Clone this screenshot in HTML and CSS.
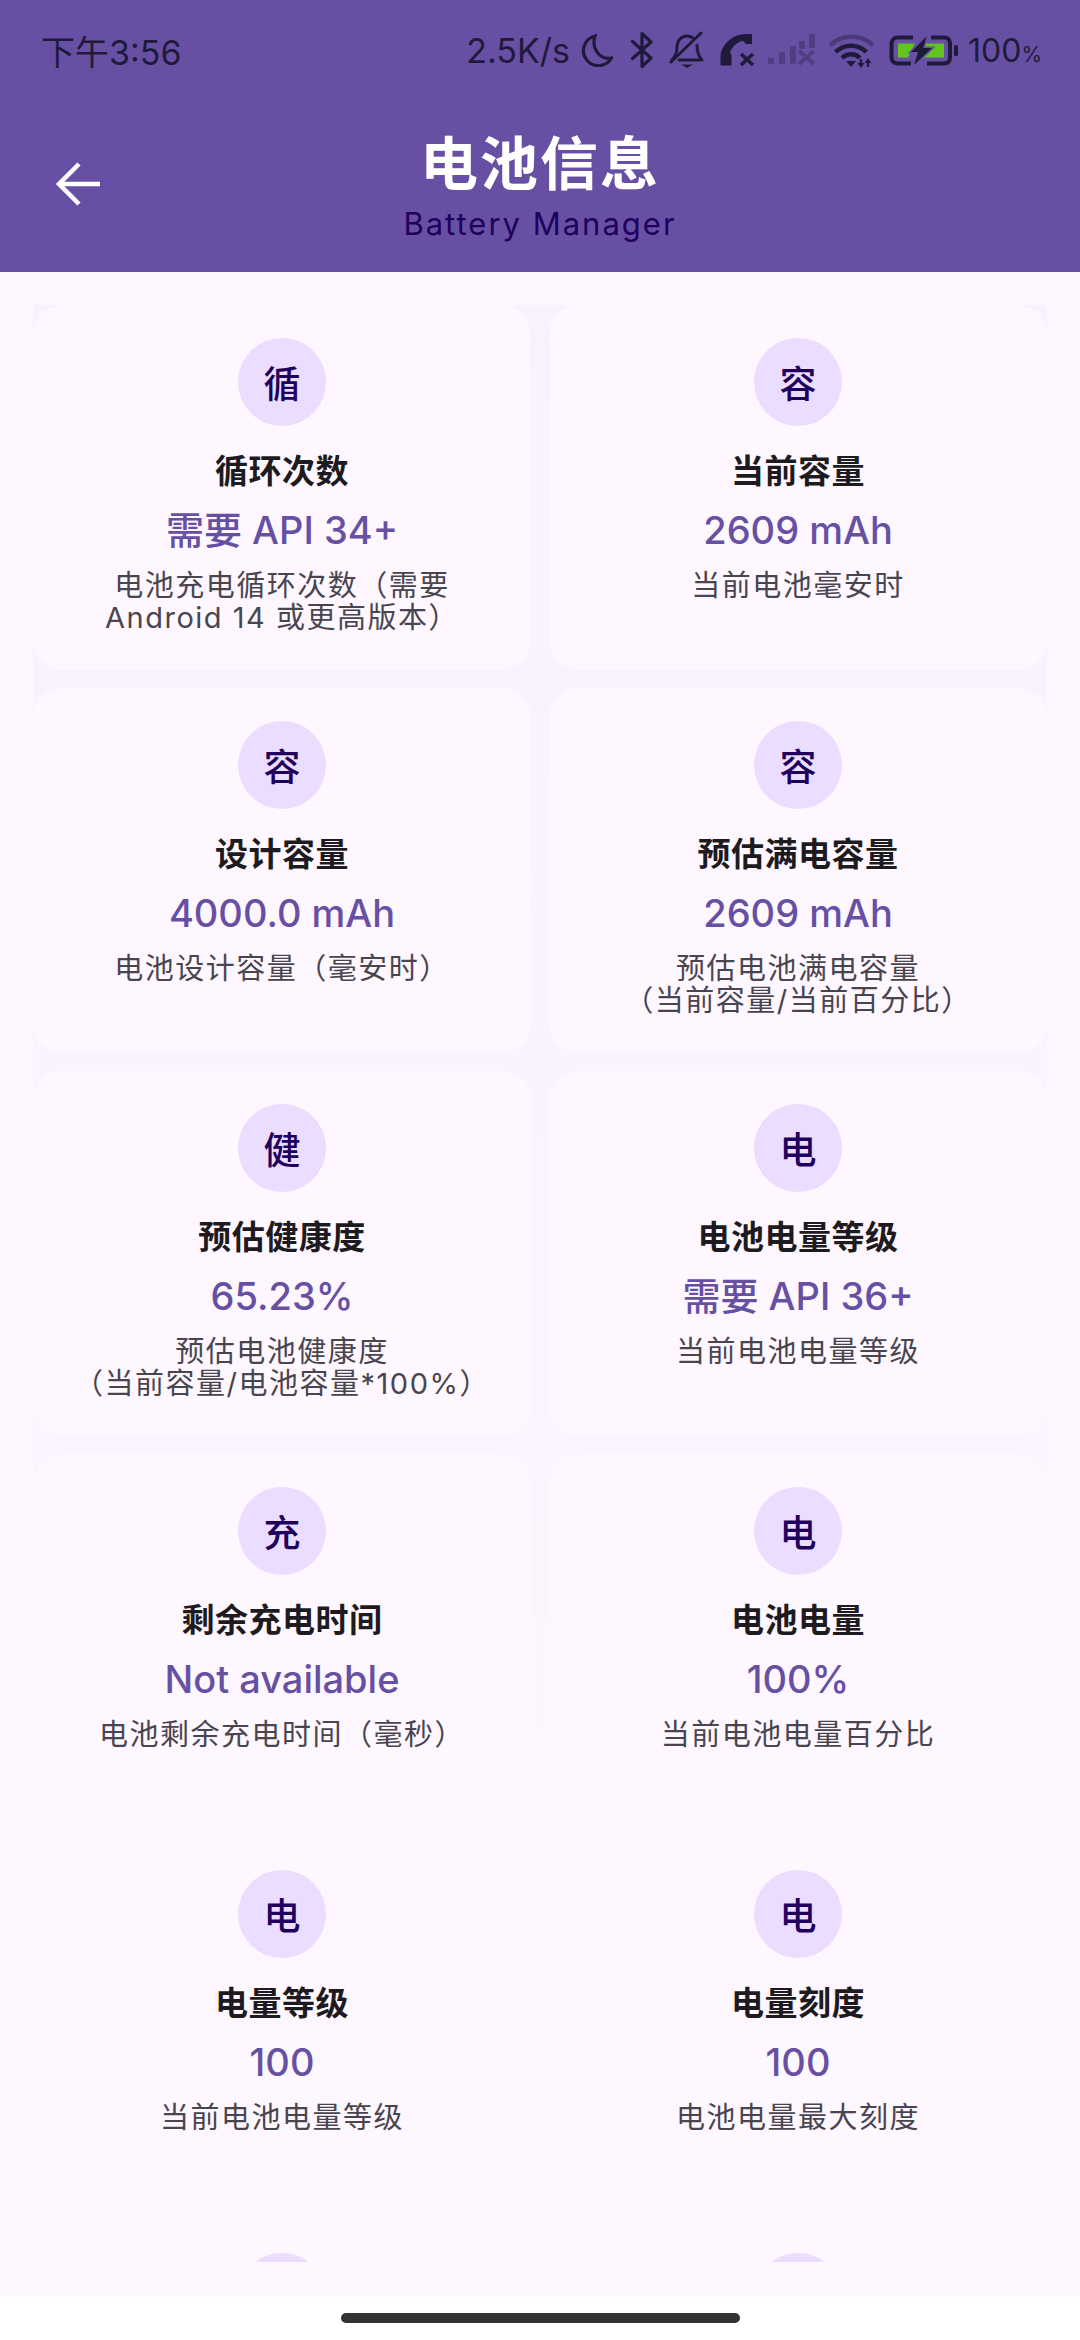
FILE: index.html
```html
<!DOCTYPE html>
<html lang="zh-CN">
<head>
    <meta charset="UTF-8">
    <meta name="viewport" content="width=device-width, initial-scale=1.0">
    <title>电池信息</title>
    <link rel="stylesheet" href="styles.css">
</head>
<body>
    <div class="app">
        <!-- Header -->
        <header class="top">
            <div class="status-bar">
                <span class="clock">下午3:56</span>
                <div class="status-right">
                    <span class="speed">2.5K/s</span>
                    <svg class="ic-moon" width="33" height="33" viewBox="0 0 33 33" fill="none" stroke="#201a3a" stroke-width="3.200">
                        <path d="M15 2A15 15 0 1 0 31.500 24C20 26 11 15 15 2Z"/>
                    </svg>
                    <svg class="ic-bt" width="24" height="38" viewBox="0 0 24 38" fill="none" stroke="#201a3a" stroke-width="3.200" stroke-linejoin="round" stroke-linecap="round">
                        <path d="M2.500 10.500 21 27 12 35.500V2.500L21 11 2.500 27.500"/>
                    </svg>
                    <svg class="ic-bell" width="38" height="38" viewBox="0 0 38 38" fill="none" stroke="#201a3a" stroke-width="3" stroke-linejoin="round" stroke-linecap="round">
                        <path d="M4 29C7 26 9 22 9 16 9 10 13 5 19 5 21 5 23 5.500 25 7"/>
                        <path d="M29 14C29 22 31 26 34 29H11"/>
                        <path d="M3 31 33 2"/>
                        <path d="M13 33.500H25L19 37Z" fill="#201a3a" stroke="none"/>
                    </svg>
                    <svg class="ic-call" width="36" height="33" viewBox="0 0 36 33" fill="#201a3a">
                        <path d="M0.500 31.500V22C1 13 8 5 17 1.500 22 0 27 0 32 0V10H26L23 7C17 8 13 12 10 18L11.500 21V31.500Z"/>
                        <path d="M21 20 33 31M33 20 21 31" fill="none" stroke="#201a3a" stroke-width="3.600"/>
                    </svg>
                    <svg class="ic-signal" width="47" height="32" viewBox="0 0 47 32" fill="#201a3a" opacity="0.33">
                        <rect x="0" y="24" width="6" height="6" rx="1"/>
                        <rect x="11" y="18" width="6" height="12" rx="1"/>
                        <rect x="22" y="12" width="6" height="18" rx="1"/>
                        <rect x="31" y="7" width="6" height="8" rx="1"/>
                        <rect x="41" y="0" width="6" height="14" rx="1"/>
                        <path d="M31 17 46 30M46 17 31 30" fill="none" stroke="#201a3a" stroke-width="4"/>
                    </svg>
                    <svg class="ic-wifi" width="47" height="35" viewBox="0 0 47 35" fill="none" stroke="#201a3a" stroke-width="4.500">
                        <path d="M2 12C14 1 33 1 45 12" opacity="0.4"/>
                        <path d="M7.500 19C16 10.500 30 10.500 38.500 19"/>
                        <path d="M14 25C19 20 27 20 32 25"/>
                        <path d="M18 28H28L23 34Z" fill="#201a3a" stroke="none"/>
                        <path d="M33 35 29.500 30H36.500ZM40 25 36.500 30H43.500Z" fill="#201a3a" stroke="none"/>
                        <path d="M33 31V26M40 29V34" stroke-width="2.200"/>
                    </svg>
                    <svg class="ic-batt" width="69" height="31" viewBox="0 0 69 31">
                        <path fill="none" stroke="#201a3a" stroke-width="4" d="M24 2.500H9C5 2.500 2.500 5 2.500 8.500V22.500C2.500 26 5 28.500 9 28.500H22M42 2.500H55C59 2.500 61 5 61 8.500V22.500C61 26 59 28.500 55 28.500H38"/>
                        <rect x="65" y="10" width="4" height="11" rx="1.500" fill="#201a3a"/>
                        <path fill="#63c41f" d="M9 8.500H26L19 22.500H9ZM37 8.500H55V22.500H31Z"/>
                        <path fill="#201a3a" stroke="#6750a4" stroke-width="3" paint-order="stroke" d="M38 1 22 17H29L25 30 43 13H34Z"/>
                    </svg>
                    <span class="level">100<small>%</small></span>
                </div>
            </div>
            <div class="toolbar">
                <svg class="back" width="46" height="46" viewBox="0 0 46 46" fill="none" stroke="#fff" stroke-width="4.500">
                    <path d="M45 23H4M24 3 4 23 24 43"/>
                </svg>
                <div class="toolbar-title">
                    <h1>电池信息</h1>
                    <p>Battery Manager</p>
                </div>
            </div>
        </header>

        <!-- Lista -->
        <main class="scroll">
            <div class="grid">
                <section class="card">
                    <div class="badge">循</div>
                    <h2>循环次数</h2>
                    <div class="value">需要 API 34+</div>
                    <p class="desc">电池充电循环次数（需要<br>Android 14 或更高版本）</p>
                </section>
                <section class="card">
                    <div class="badge">容</div>
                    <h2>当前容量</h2>
                    <div class="value">2609 mAh</div>
                    <p class="desc">当前电池毫安时</p>
                </section>
                <section class="card">
                    <div class="badge">容</div>
                    <h2>设计容量</h2>
                    <div class="value">4000.0 mAh</div>
                    <p class="desc">电池设计容量（毫安时）</p>
                </section>
                <section class="card">
                    <div class="badge">容</div>
                    <h2>预估满电容量</h2>
                    <div class="value">2609 mAh</div>
                    <p class="desc">预估电池满电容量<br>（当前容量/当前百分比）</p>
                </section>
                <section class="card">
                    <div class="badge">健</div>
                    <h2>预估健康度</h2>
                    <div class="value">65.23%</div>
                    <p class="desc">预估电池健康度<br>（当前容量/电池容量*100%）</p>
                </section>
                <section class="card">
                    <div class="badge">电</div>
                    <h2>电池电量等级</h2>
                    <div class="value">需要 API 36+</div>
                    <p class="desc">当前电池电量等级</p>
                </section>
                <section class="card">
                    <div class="badge">充</div>
                    <h2>剩余充电时间</h2>
                    <div class="value">Not available</div>
                    <p class="desc">电池剩余充电时间（毫秒）</p>
                </section>
                <section class="card">
                    <div class="badge">电</div>
                    <h2>电池电量</h2>
                    <div class="value">100%</div>
                    <p class="desc">当前电池电量百分比</p>
                </section>
                <section class="card">
                    <div class="badge">电</div>
                    <h2>电量等级</h2>
                    <div class="value">100</div>
                    <p class="desc">当前电池电量等级</p>
                </section>
                <section class="card">
                    <div class="badge">电</div>
                    <h2>电量刻度</h2>
                    <div class="value">100</div>
                    <p class="desc">电池电量最大刻度</p>
                </section>
                <section class="card"><div class="badge"></div></section>
                <section class="card"><div class="badge"></div></section>
            </div>
        </main>

        <!-- Barra de navegação -->
        <div class="home-area">
            <div class="home-bar"></div>
        </div>
    </div>
</body>
</html>
```

FILE: styles.css
```css
html, body {
    margin: 0;
    padding: 0;
    background-color: #fef7ff;
}
body {
    font-family: Inter, "Noto Sans CJK SC", sans-serif;
}
.app {
    width: 1080px;
    height: 2340px;
    display: flex;
    flex-direction: column;
    overflow: hidden;
}

/* Header */
.top {
    height: 272px;
    flex: none;
    background-color: #6750a4;
}
.status-bar {
    height: 100px;
    padding: 0 38px 0 41px;
    display: flex;
    align-items: center;
    justify-content: space-between;
    color: #201a3a;
    font-size: 34px;
    box-sizing: border-box;
}
.status-right {
    display: flex;
    align-items: center;
}
.speed {
    margin-right: 10px;
}
.ic-bt {
    margin-left: 17px;
}
.ic-bell {
    margin-left: 14px;
}
.ic-call {
    margin-left: 14px;
}
.ic-signal {
    margin-left: 12px;
}
.ic-wifi {
    margin-left: 13px;
}
.ic-batt {
    margin-left: 14px;
}
.level {
    margin-left: 10px;
    font-size: 32px;
}
.level small {
    font-size: 21px;
}
.toolbar {
    position: relative;
    height: 172px;
}
.back {
    position: absolute;
    left: 55px;
    top: 61px;
}
.toolbar-title {
    text-align: center;
    padding-top: 30px;
}
h1 {
    margin: 0;
    color: #fff;
    font-size: 58px;
    line-height: 68px;
    font-weight: 700;
    letter-spacing: 2px;
}
.toolbar-title p {
    margin: 6px 0 0;
    color: #21005d;
    font-size: 31px;
    line-height: 40px;
    letter-spacing: 2px;
}

/* Lista */
.scroll {
    height: 1990px;
    flex: none;
    padding: 33px 33px 0;
    box-sizing: border-box;
    overflow: hidden;
}
.grid {
    display: grid;
    grid-template-columns: 498px 498px;
    grid-auto-rows: 365px;
    gap: 18px;
    background: linear-gradient(#f7f2fe 0, #fbf5fe 1250px, #fef7ff 1600px);
}
.card {
    background-color: #fef7ff;
    border-radius: 30px;
    padding-top: 33px;
    display: flex;
    flex-direction: column;
    align-items: center;
    text-align: center;
}
.badge {
    width: 88px;
    height: 88px;
    border-radius: 50%;
    background-color: #eaddff;
    color: #21005d;
    font-size: 37px;
    font-weight: 500;
    display: flex;
    align-items: center;
    justify-content: center;
    flex: none;
}
h2 {
    margin: 23px 0 0;
    color: #1d1b20;
    font-size: 33px;
    line-height: 44px;
    font-weight: 700;
    letter-spacing: 0.5px;
}
.value {
    margin-top: 12px;
    color: #6750a4;
    font-size: 38px;
    line-height: 50px;
    font-weight: 500;
}
.desc {
    margin: 15px 0 0;
    color: #49454f;
    font-size: 29px;
    line-height: 32px;
    letter-spacing: 1.5px;
}

/* Barra de navegação */
.home-area {
    flex: 1;
    display: flex;
    flex-direction: column;
    justify-content: flex-end;
    background: linear-gradient(#fef7ff 0, #fef7ff 34px, #fff 35px);
}
.home-bar {
    width: 399px;
    height: 10px;
    margin: 0 auto 17px;
    border-radius: 5px;
    background-color: #333;
}
```
